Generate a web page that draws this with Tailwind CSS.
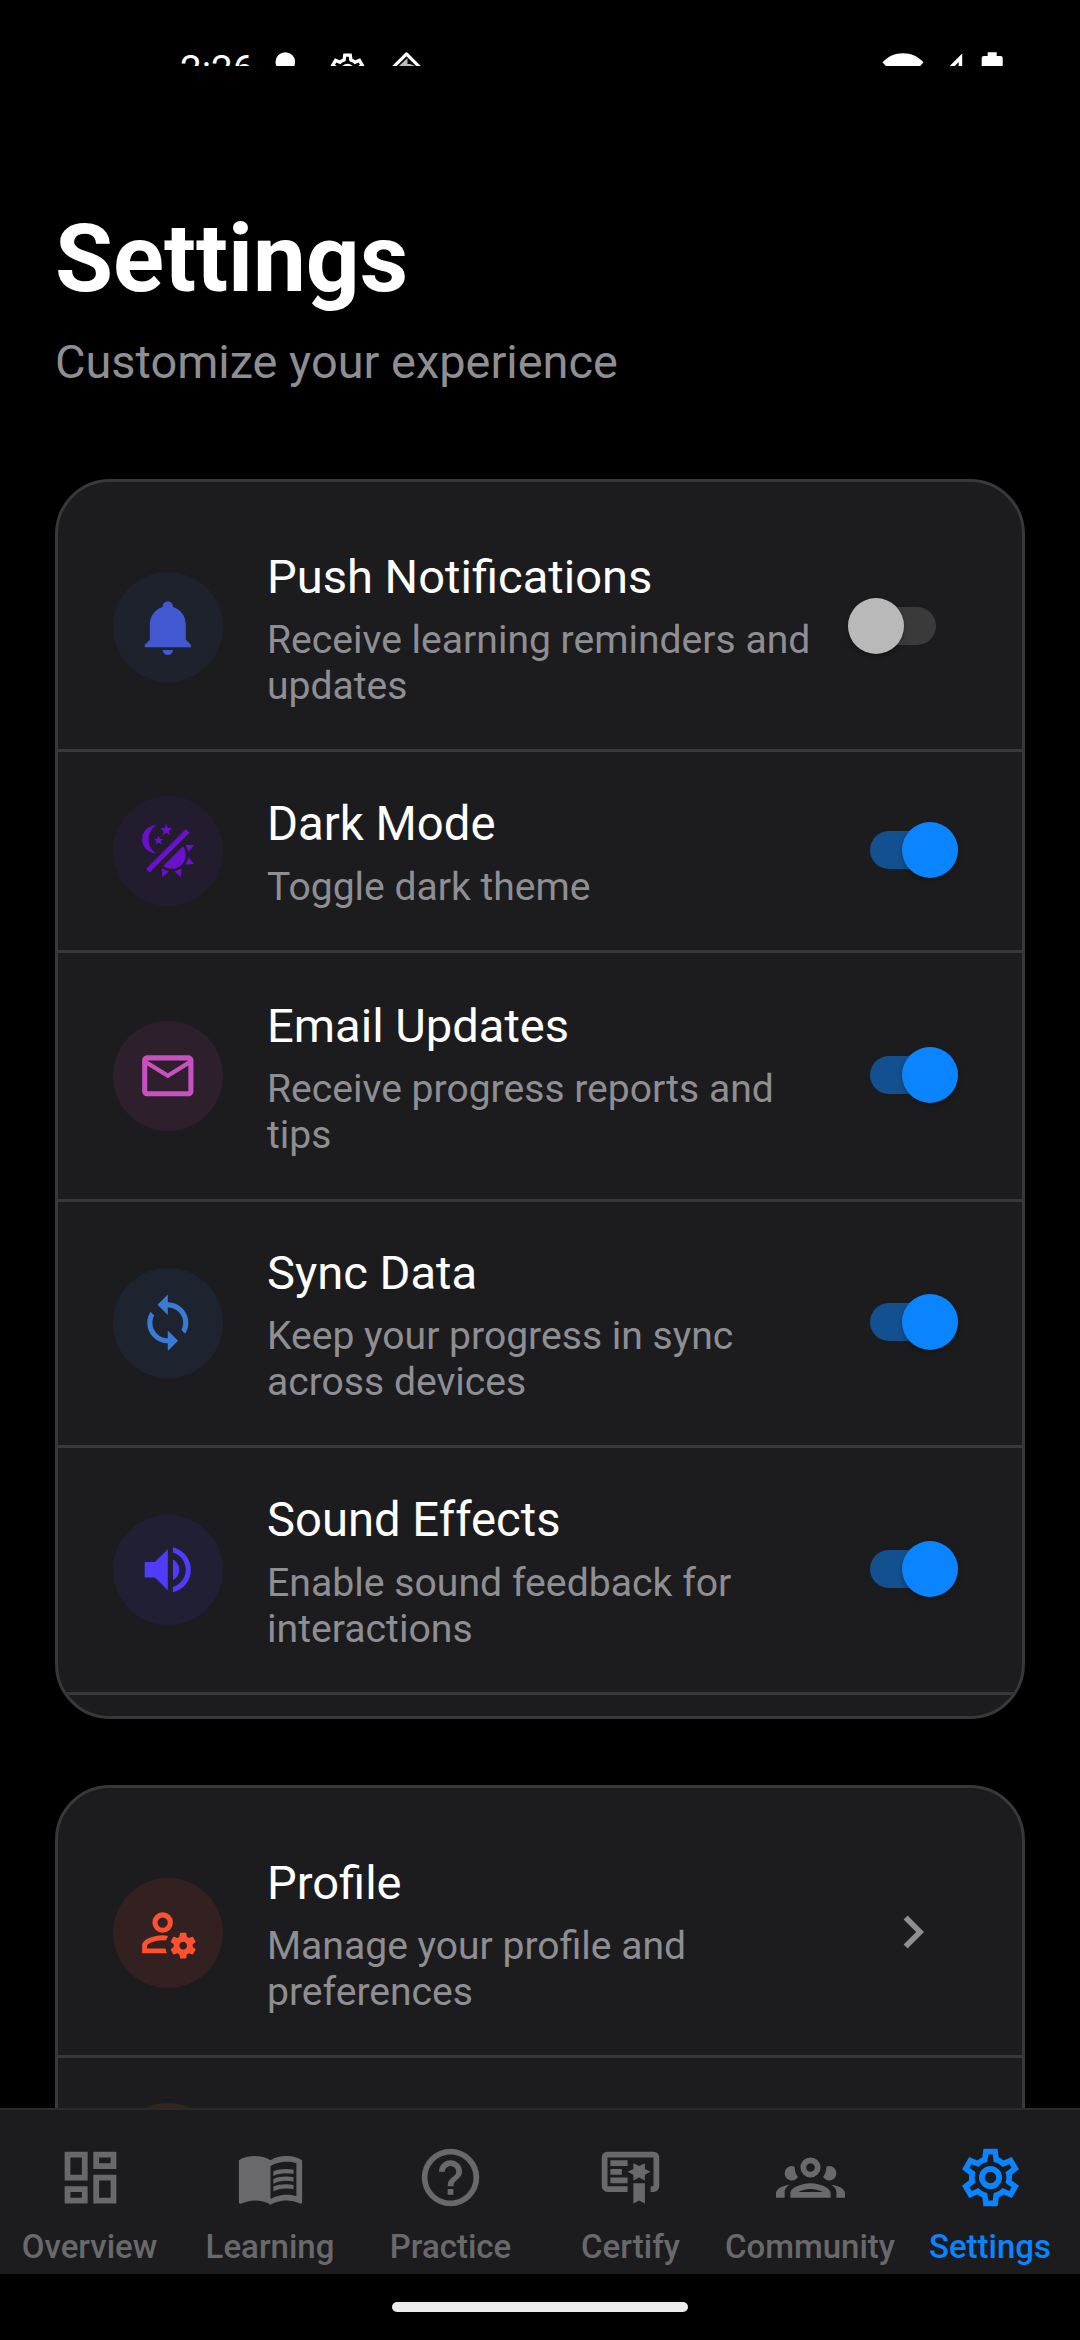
<!DOCTYPE html>
<html lang="en">
<head>
<meta charset="utf-8">
<title>Settings</title>
<script src="https://cdn.jsdelivr.net/npm/@tailwindcss/browser@4"></script>
</head>
<body class="bg-black">
<div class="flex h-[2340px] w-[1080px] flex-col overflow-hidden bg-black font-[Roboto,sans-serif] text-white">

  <!-- Status bar -->
  <header class="flex h-[66px] shrink-0 items-start overflow-hidden pl-[180px]">
    <div class="mt-[47px] w-[94px] shrink-0 whitespace-nowrap text-[38.5px] leading-[46px]">2:26</div>
    <svg class="mt-[52px] ml-[1px] h-6 w-5 shrink-0" viewBox="0 0 20 24" fill="#fff"><circle cx="10.3" cy="10" r="9.8"/></svg>
    <svg class="mt-[50px] ml-[31.5px] h-[41px] w-[41px] shrink-0" viewBox="0 0 24 24" fill="#fff"><use href="#cog"/></svg>
    <svg class="mt-[50px] ml-[18.5px] h-[41px] w-[41px] shrink-0" viewBox="0 0 41 41" fill="none"><path d="M4 20.5 20.5 4 37 20.5 20.5 37Z" stroke="#fff" stroke-width="3.2" stroke-linejoin="round"/><path d="M13 16 21.5 8V14H24L29 16Z" fill="#bbb"/></svg>
    <svg class="mt-[50px] ml-[455px] h-10 w-[42px] shrink-0" viewBox="0 0 42 40" fill="#fff"><path d="M.5 12.3C6 6.5 13 3.3 21 3.3s15 3.2 20.5 9L21 35Z"/></svg>
    <svg class="mt-[50px] ml-[6px] h-10 w-[34px] shrink-0" viewBox="0 0 34 40" fill="#fff"><path fill-rule="evenodd" d="M32.2 3.5V34H1.700ZM28.700 12v19H9.700Z"/></svg>
    <svg class="mt-[50px] ml-[16px] h-10 w-6 shrink-0" viewBox="0 0 24 40" fill="#fff"><path d="M7.700 2.200h9V6H20.700a2 2 0 0 1 2 2v30H1.700V8a2 2 0 0 1 2-2h4Z"/></svg>
  </header>

  <!-- Scrolling content -->
  <main class="flex h-[2042px] shrink-0 flex-col overflow-hidden px-[55px] pt-[138px]">
    <h1 class="text-[94.4px] leading-[110px] font-bold">Settings</h1>
    <p class="mt-5 text-[46.9px] leading-[56px] text-[#8e8e93]">Customize your experience</p>

    <section class="mt-[89px] h-[1240px] shrink-0 overflow-hidden rounded-[55px] border-[3px] border-[#38383a] bg-[#1c1c1e] pt-[22px]">
      <div class="flex h-[248px] items-center border-b-[3px] border-[#38383a] pl-[55px]">
        <div class="grid size-[110px] shrink-0 place-items-center rounded-full bg-[#1e222d]"><svg class="size-[61.6px]" viewBox="0 0 24 24" fill="#4158d0"><path d="M21,19V20H3V19L5,17V11C5,7.9 7.03,5.17 10,4.29C10,4.19 10,4.1 10,4A2,2 0 0,1 12,2A2,2 0 0,1 14,4C14,4.1 14,4.19 14,4.29C16.97,5.17 19,7.9 19,11V17L21,19M14,21A2,2 0 0,1 12,23A2,2 0 0,1 10,21"/></svg></div>
        <div class="ml-[44px] w-[560px] pt-[5px]">
          <h2 class="text-[47.1px] leading-[56px]">Push Notifications</h2>
          <p class="mt-3 text-[39.1px] leading-[46px] text-[#8e8e93]">Receive learning reminders and<br>updates</p>
        </div>
        <div class="relative mb-[2px] ml-[21px] h-14 w-[88px]"><div class="mt-[9px] h-[38px] rounded-full bg-[#3a3a3b]"></div><div class="absolute top-0 left-0 size-14 rounded-full bg-[#b9b9b9] shadow-[0_3px_5px_rgba(0,0,0,0.25)]"></div></div>
      </div>
      <div class="flex h-[201px] items-center border-b-[3px] border-[#38383a] pl-[55px]">
        <div class="grid size-[110px] shrink-0 place-items-center rounded-full bg-[#231b2e]"><svg class="size-[61.6px]" viewBox="0 0 24 24" fill="#6a11cb"><path d="M7.500,2C5.710,3.150 4.500,5.180 4.500,7.500C4.500,9.820 5.710,11.850 7.530,13C4.460,13 2,10.540 2,7.500A5.500,5.500 0 0,1 7.500,2M19.070,3.500L20.500,4.930L4.930,20.500L3.500,19.070L19.070,3.500M12.890,5.930L11.410,5L9.970,6L10.390,4.300L9,3.240L10.750,3.120L11.330,1.470L12,3.100L13.730,3.130L12.380,4.260L12.890,5.930M9.590,9.540L8.430,8.810L7.310,9.590L7.650,8.270L6.560,7.440L7.920,7.350L8.370,6.060L8.880,7.330L10.240,7.360L9.190,8.230L9.590,9.540M19,13.500A5.500,5.500 0 0,1 13.500,19C12.280,19 11.150,18.600 10.240,17.930L17.930,10.240C18.600,11.150 19,12.280 19,13.500M14.600,20.080L17.370,18.930L17.130,22.280L14.600,20.080M18.930,17.380L20.080,14.610L22.280,17.150L18.930,17.380M20.080,12.420L18.940,9.640L22.280,9.880L20.080,12.420M9.630,18.930L12.400,20.080L9.870,22.270L9.630,18.930Z"/></svg></div>
        <div class="ml-[44px] w-[560px] pt-[3px]">
          <h2 class="text-[47.3px] leading-[56px]">Dark Mode</h2>
          <p class="mt-3 text-[39.1px] leading-[46px] text-[#8e8e93]">Toggle dark theme</p>
        </div>
        <div class="relative mb-[3px] ml-[43px] h-14 w-[88px]"><div class="mt-[9px] h-[38px] rounded-full bg-[#13508f]"></div><div class="absolute top-0 right-0 size-14 rounded-full bg-[#0a84ff] shadow-[0_3px_5px_rgba(0,0,0,0.25)]"></div></div>
      </div>
      <div class="flex h-[249px] items-center border-b-[3px] border-[#38383a] pl-[55px]">
        <div class="grid size-[110px] shrink-0 place-items-center rounded-full bg-[#2d202c]"><svg class="size-[61.6px]" viewBox="0 0 24 24" fill="#c850c0"><path d="M22 6C22 4.900 21.100 4 20 4H4C2.900 4 2 4.900 2 6V18C2 19.100 2.900 20 4 20H20C21.100 20 22 19.100 22 18V6M20 6L12 11L4 6H20M20 18H4V8L12 13L20 8V18Z"/></svg></div>
        <div class="ml-[44px] w-[560px] pt-[3px]">
          <h2 class="text-[47.1px] leading-[56px]">Email Updates</h2>
          <p class="mt-3 text-[39.1px] leading-[46px] text-[#8e8e93]">Receive progress reports and<br>tips</p>
        </div>
        <div class="relative mb-[3px] ml-[43px] h-14 w-[88px]"><div class="mt-[9px] h-[38px] rounded-full bg-[#13508f]"></div><div class="absolute top-0 right-0 size-14 rounded-full bg-[#0a84ff] shadow-[0_3px_5px_rgba(0,0,0,0.25)]"></div></div>
      </div>
      <div class="flex h-[246px] items-center border-b-[3px] border-[#38383a] pl-[55px]">
        <div class="mb-px grid size-[110px] shrink-0 place-items-center rounded-full bg-[#1d2430]"><svg class="size-[61.6px]" viewBox="0 0 24 24" fill="#3a7bd5"><path d="M12,18A6,6 0 0,1 6,12C6,11 6.250,10.030 6.700,9.200L5.240,7.740C4.460,8.970 4,10.430 4,12A8,8 0 0,0 12,20V23L16,19L12,15M12,4V1L8,5L12,9V6A6,6 0 0,1 18,12C18,13 17.750,13.970 17.300,14.800L18.760,16.260C19.540,15.030 20,13.570 20,12A8,8 0 0,0 12,4Z"/></svg></div>
        <div class="ml-[44px] w-[560px] pt-[3px]">
          <h2 class="text-[47.1px] leading-[56px]">Sync Data</h2>
          <p class="mt-3 text-[39.1px] leading-[46px] text-[#8e8e93]">Keep your progress in sync<br>across devices</p>
        </div>
        <div class="relative mb-[4px] ml-[43px] h-14 w-[88px]"><div class="mt-[9px] h-[38px] rounded-full bg-[#13508f]"></div><div class="absolute top-0 right-0 size-14 rounded-full bg-[#0a84ff] shadow-[0_3px_5px_rgba(0,0,0,0.25)]"></div></div>
      </div>
      <div class="flex h-[247px] items-center border-b-[3px] border-[#38383a] pl-[55px]">
        <div class="grid size-[110px] shrink-0 place-items-center rounded-full bg-[#211f33]"><svg class="size-[61.6px]" viewBox="0 0 24 24" fill="#4e3cfa"><path d="M14,3.230V5.290C16.890,6.150 19,8.830 19,12C19,15.170 16.890,17.840 14,18.700V20.770C18,19.860 21,16.280 21,12C21,7.720 18,4.140 14,3.230M16.500,12C16.500,10.230 15.500,8.710 14,7.970V16C15.500,15.290 16.500,13.760 16.500,12M3,9V15H7L12,20V4L7,9H3Z"/></svg></div>
        <div class="ml-[44px] w-[560px] pt-[3px]">
          <h2 class="text-[47.2px] leading-[56px]">Sound Effects</h2>
          <p class="mt-3 text-[39.2px] leading-[46px] text-[#8e8e93]">Enable sound feedback for<br>interactions</p>
        </div>
        <div class="relative mb-[3px] ml-[43px] h-14 w-[88px]"><div class="mt-[9px] h-[38px] rounded-full bg-[#13508f]"></div><div class="absolute top-0 right-0 size-14 rounded-full bg-[#0a84ff] shadow-[0_3px_5px_rgba(0,0,0,0.25)]"></div></div>
      </div>
    </section>

    <section class="mt-[66px] h-[520px] shrink-0 overflow-hidden rounded-[55px] border-[3px] border-[#38383a] bg-[#1c1c1e] pt-[22px]">
      <div class="flex h-[248px] items-center border-b-[3px] border-[#38383a] pl-[55px]">
        <div class="grid size-[110px] shrink-0 place-items-center rounded-full bg-[#332020]"><svg class="size-[61.6px]" viewBox="0 0 24 24" fill="#ff512f"><path d="M10 4A4 4 0 0 0 6 8A4 4 0 0 0 10 12A4 4 0 0 0 14 8A4 4 0 0 0 10 4M10 6A2 2 0 0 1 12 8A2 2 0 0 1 10 10A2 2 0 0 1 8 8A2 2 0 0 1 10 6M17 12C16.840 12 16.760 12.080 16.760 12.240L16.500 13.500C16.280 13.680 15.960 13.840 15.720 14L14.440 13.500C14.360 13.500 14.200 13.500 14.120 13.600L13.160 15.360C13.080 15.440 13.080 15.600 13.240 15.680L14.280 16.500V17.500L13.240 18.320C13.160 18.400 13.080 18.560 13.160 18.640L14.120 20.400C14.200 20.500 14.360 20.500 14.440 20.500L15.720 20C15.960 20.160 16.280 20.320 16.500 20.500L16.760 21.760C16.760 21.920 16.840 22 17 22H19C19.080 22 19.240 21.920 19.240 21.760L19.400 20.500C19.720 20.320 20.040 20.160 20.280 20L21.500 20.500C21.640 20.500 21.800 20.500 21.800 20.400L22.840 18.640C22.920 18.560 22.840 18.400 22.760 18.320L21.720 17.500V16.500L22.760 15.680C22.840 15.600 22.920 15.440 22.840 15.360L21.800 13.600C21.800 13.500 21.640 13.500 21.500 13.500L20.280 14C20.040 13.840 19.720 13.680 19.400 13.500L19.240 12.240C19.240 12.080 19.080 12 19 12H17M10 13C7.330 13 2 14.330 2 17V20H11.670C11.390 19.410 11.190 18.770 11.090 18.100H3.900V17C3.900 16.360 7.030 14.900 10 14.900C10.430 14.900 10.870 14.940 11.300 15C11.500 14.360 11.770 13.760 12.120 13.210C11.340 13.080 10.600 13 10 13M18.040 15.500C18.840 15.500 19.500 16.160 19.500 17.040C19.500 17.840 18.840 18.500 18.040 18.500C17.160 18.500 16.500 17.840 16.500 17.040C16.500 16.160 17.160 15.500 18.040 15.500Z"/></svg></div>
        <div class="ml-[44px] w-[560px] pt-[5px]">
          <h2 class="text-[47.1px] leading-[56px]">Profile</h2>
          <p class="mt-3 text-[39.1px] leading-[46px] text-[#8e8e93]">Manage your profile and<br>preferences</p>
        </div>
        <svg class="mb-px ml-[53px] size-[66px]" viewBox="0 0 24 24" fill="#8e8e93"><path d="M8.590,16.580L13.170,12L8.590,7.410L10,6L16,12L10,18L8.590,16.580Z"/></svg>
      </div>
      <div class="flex h-[199px] items-center pl-[55px]">
        <div class="size-[110px] shrink-0 rounded-full bg-[#30261c]"></div>
      </div>
    </section>
  </main>

  <!-- Tab bar -->
  <nav class="grid h-[166px] shrink-0 grid-cols-6 border-t-2 border-[#2a2a2c] bg-[#1c1c1e] pt-[33px] text-center text-[33px] leading-[40px] font-medium text-[#69696b]">
    <div class="flex flex-col items-center"><svg class="size-[69px] shrink-0" viewBox="0 0 24 24" fill="currentColor"><path d="M19,5V7H15V5H19M9,5V11H5V5H9M19,13V19H15V13H19M9,17V19H5V17H9M21,3H13V9H21V3M11,3H3V13H11V3M21,11H13V21H21V11M11,15H3V21H11V15Z"/></svg><span class="mt-[15px] mr-px">Overview</span></div>
    <div class="flex flex-col items-center"><svg class="size-[69px] shrink-0" viewBox="0 0 24 24" fill="currentColor"><path d="M21 5c-1.110-.35-2.330-.5-3.500-.5-1.950 0-4.050.4-5.500 1.500-1.450-1.100-3.550-1.500-5.500-1.500S2.450 4.900 1 6v14.650c0 .25.25.5.5.5.1 0 .15-.05.25-.05C3.100 20.450 5.050 20 6.500 20c1.950 0 4.050.4 5.500 1.500 1.350-.85 3.800-1.500 5.500-1.500 1.650 0 3.350.3 4.750 1.050.1.05.15.05.25.05.25 0 .5-.25.5-.5V6c-.6-.45-1.250-.75-2-1zm0 13.500c-1.100-.35-2.300-.5-3.500-.5-1.700 0-4.150.65-5.500 1.500V8c1.350-.85 3.800-1.500 5.500-1.500 1.200 0 2.400.15 3.500.5v11.500z"/><path d="M17.500 10.500c.88 0 1.730.09 2.500.26V9.240c-.79-.15-1.640-.24-2.500-.24-1.700 0-3.240.29-4.500.83v1.660c1.130-.64 2.700-.99 4.500-.99zM13 12.490v1.660c1.130-.64 2.700-.99 4.500-.99.88 0 1.730.09 2.500.26V11.900c-.79-.15-1.640-.24-2.500-.24-1.700 0-3.240.3-4.500.83zM17.500 14.330c-1.700 0-3.240.29-4.500.83v1.660c1.130-.64 2.700-.99 4.500-.99.88 0 1.730.09 2.500.26v-1.520c-.79-.16-1.640-.24-2.500-.24z"/></svg><span class="mt-[15px]">Learning</span></div>
    <div class="flex flex-col items-center"><svg class="size-[69px] shrink-0" viewBox="0 0 24 24" fill="currentColor"><path d="M11,18H13V16H11V18M12,2A10,10 0 0,0 2,12A10,10 0 0,0 12,22A10,10 0 0,0 22,12A10,10 0 0,0 12,2M12,20C7.590,20 4,16.410 4,12C4,7.590 7.590,4 12,4C16.410,4 20,7.590 20,12C20,16.410 16.410,20 12,20M12,6A4,4 0 0,0 8,10H10A2,2 0 0,1 12,8A2,2 0 0,1 14,10C14,12 11,11.750 11,15H13C13,12.750 16,12.500 16,10A4,4 0 0,0 12,6Z"/></svg><span class="mt-[15px] ml-px">Practice</span></div>
    <div class="flex flex-col items-center"><svg class="size-[69px] shrink-0" viewBox="0 0 24 24" fill="currentColor"><path d="M13 21L15 20L17 21V14H13M17 9V7L15 8L13 7V9L11 10L13 11V13L15 12L17 13V11L19 10M20 3H4A2 2 0 0 0 2 5V15A2 2 0 0 0 4 17H11V15H4V5H20V15H19V17H20A2 2 0 0 0 22 15V5A2 2 0 0 0 20 3M11 8H5V6H11M9 11H5V9H9M11 14H5V12H11Z"/></svg><span class="mt-[15px] ml-px">Certify</span></div>
    <div class="flex flex-col items-center"><svg class="size-[69px] shrink-0" viewBox="0 0 24 24" fill="currentColor"><path d="M12,5A3.500,3.500 0 0,0 8.500,8.500A3.500,3.500 0 0,0 12,12A3.500,3.500 0 0,0 15.500,8.500A3.500,3.500 0 0,0 12,5M12,7A1.500,1.500 0 0,1 13.500,8.500A1.500,1.500 0 0,1 12,10A1.500,1.500 0 0,1 10.500,8.500A1.500,1.500 0 0,1 12,7M5.500,8A2.500,2.500 0 0,0 3,10.500C3,11.440 3.530,12.250 4.290,12.680C4.650,12.880 5.060,13 5.500,13C5.940,13 6.350,12.880 6.710,12.680C7.080,12.470 7.390,12.170 7.620,11.810C6.890,10.860 6.500,9.700 6.500,8.500C6.500,8.410 6.500,8.310 6.500,8.220C6.200,8.080 5.860,8 5.500,8M18.500,8C18.140,8 17.800,8.080 17.500,8.220C17.500,8.310 17.500,8.410 17.500,8.500C17.500,9.700 17.110,10.860 16.380,11.810C16.500,12 16.630,12.150 16.780,12.300C16.940,12.450 17.100,12.580 17.290,12.680C17.650,12.880 18.060,13 18.500,13C18.940,13 19.350,12.880 19.710,12.680C20.470,12.250 21,11.440 21,10.500A2.500,2.500 0 0,0 18.500,8M12,14C9.660,14 5,15.170 5,17.500V19H19V17.500C19,15.170 14.340,14 12,14M4.710,14.550C2.780,14.780 0,15.760 0,17.500V19H3V17.070C3,16.060 3.690,15.220 4.710,14.550M19.290,14.550C20.310,15.220 21,16.060 21,17.070V19H24V17.500C24,15.760 21.220,14.780 19.290,14.550M12,16C13.530,16 15.240,16.500 16.230,17H7.770C8.760,16.500 10.470,16 12,16Z"/></svg><span class="mt-[15px]">Community</span></div>
    <div class="flex flex-col items-center text-[#0a84ff]"><svg class="size-[69px] shrink-0" viewBox="0 0 24 24" fill="currentColor"><path id="cog" d="M12,8A4,4 0 0,1 16,12A4,4 0 0,1 12,16A4,4 0 0,1 8,12A4,4 0 0,1 12,8M12,10A2,2 0 0,0 10,12A2,2 0 0,0 12,14A2,2 0 0,0 14,12A2,2 0 0,0 12,10M9.550,22L9.130,18.930C8.500,18.680 7.960,18.340 7.440,17.940L4.600,19.150L2.100,14.900L4.570,12.970L4.500,12L4.570,11L2.100,9.100L4.600,4.900L7.440,6.050C7.960,5.660 8.500,5.320 9.130,5.070L9.550,2H14.450L14.870,5.070C15.500,5.320 16.040,5.660 16.560,6.050L19.400,4.900L21.900,9.100L19.430,11L19.500,12L19.430,13L21.900,14.900L19.400,19.150L16.560,17.950C16.040,18.340 15.500,18.680 14.870,18.930L14.450,22H9.550M11.250,4L10.880,6.610C9.680,6.860 8.620,7.500 7.850,8.390L5.440,7.350L4.690,8.650L6.800,10.200C6.400,11.370 6.400,12.640 6.800,13.800L4.680,15.360L5.430,16.660L7.860,15.620C8.630,16.500 9.680,17.140 10.870,17.380L11.240,20H12.760L13.130,17.390C14.320,17.140 15.370,16.500 16.140,15.620L18.570,16.660L19.320,15.360L17.200,13.810C17.600,12.640 17.600,11.370 17.200,10.200L19.310,8.650L18.560,7.350L16.150,8.390C15.380,7.500 14.320,6.860 13.120,6.620L12.750,4H11.250Z"/></svg><span class="mt-[15px]">Settings</span></div>
  </nav>

  <!-- Gesture bar -->
  <footer class="flex h-[66px] shrink-0 justify-center pt-[28px]"><div class="h-[10px] w-[296px] rounded-full bg-[#ebebeb]"></div></footer>
</div>
</body>
</html>
